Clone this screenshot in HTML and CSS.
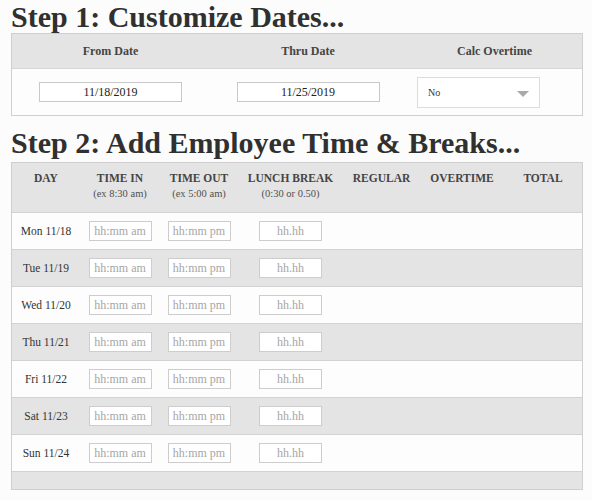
FILE: index.html
```html
<!DOCTYPE html>
<html>
<head>
<meta charset="utf-8">
<link rel="stylesheet" href="styles.css">
</head>
<body>
<div class="page">
  <h1 class="step step1">Step 1: Customize Dates...</h1>
  <div class="dates">
    <div class="dates-head">
      <div class="dh">From Date</div>
      <div class="dh">Thru Date</div>
      <div class="dh">Calc Overtime</div>
    </div>
    <div class="dates-row">
      <div class="dc"><input class="date" type="text" value="11/18/2019"></div>
      <div class="dc"><input class="date" type="text" value="11/25/2019"></div>
      <div class="dc dc-left">
        <div class="select">No<span class="arrow"></span></div>
      </div>
    </div>
  </div>

  <h1 class="step step2">Step 2: Add Employee Time &amp; Breaks...</h1>
  <div class="sheet">
    <div class="srow shead">
      <div class="hc">DAY</div>
      <div class="hc">TIME IN<span class="sub">(ex 8:30 am)</span></div>
      <div class="hc">TIME OUT<span class="sub">(ex 5:00 am)</span></div>
      <div class="hc">LUNCH BREAK<span class="sub">(0:30 or 0.50)</span></div>
      <div class="hc">REGULAR</div>
      <div class="hc">OVERTIME</div>
      <div class="hc">TOTAL</div>
    </div>

    <div class="srow drow">
      <div class="cc day">Mon 11/18</div>
      <div class="cc"><input class="tin" type="text" placeholder="hh:mm am"></div>
      <div class="cc"><input class="tin" type="text" placeholder="hh:mm pm"></div>
      <div class="cc"><input class="tin" type="text" placeholder="hh.hh"></div>
      <div class="cc"></div><div class="cc"></div><div class="cc"></div>
    </div>
    <div class="srow drow alt">
      <div class="cc day">Tue 11/19</div>
      <div class="cc"><input class="tin" type="text" placeholder="hh:mm am"></div>
      <div class="cc"><input class="tin" type="text" placeholder="hh:mm pm"></div>
      <div class="cc"><input class="tin" type="text" placeholder="hh.hh"></div>
      <div class="cc"></div><div class="cc"></div><div class="cc"></div>
    </div>
    <div class="srow drow">
      <div class="cc day">Wed 11/20</div>
      <div class="cc"><input class="tin" type="text" placeholder="hh:mm am"></div>
      <div class="cc"><input class="tin" type="text" placeholder="hh:mm pm"></div>
      <div class="cc"><input class="tin" type="text" placeholder="hh.hh"></div>
      <div class="cc"></div><div class="cc"></div><div class="cc"></div>
    </div>
    <div class="srow drow alt">
      <div class="cc day">Thu 11/21</div>
      <div class="cc"><input class="tin" type="text" placeholder="hh:mm am"></div>
      <div class="cc"><input class="tin" type="text" placeholder="hh:mm pm"></div>
      <div class="cc"><input class="tin" type="text" placeholder="hh.hh"></div>
      <div class="cc"></div><div class="cc"></div><div class="cc"></div>
    </div>
    <div class="srow drow">
      <div class="cc day">Fri 11/22</div>
      <div class="cc"><input class="tin" type="text" placeholder="hh:mm am"></div>
      <div class="cc"><input class="tin" type="text" placeholder="hh:mm pm"></div>
      <div class="cc"><input class="tin" type="text" placeholder="hh.hh"></div>
      <div class="cc"></div><div class="cc"></div><div class="cc"></div>
    </div>
    <div class="srow drow alt">
      <div class="cc day">Sat 11/23</div>
      <div class="cc"><input class="tin" type="text" placeholder="hh:mm am"></div>
      <div class="cc"><input class="tin" type="text" placeholder="hh:mm pm"></div>
      <div class="cc"><input class="tin" type="text" placeholder="hh.hh"></div>
      <div class="cc"></div><div class="cc"></div><div class="cc"></div>
    </div>
    <div class="srow drow">
      <div class="cc day">Sun 11/24</div>
      <div class="cc"><input class="tin" type="text" placeholder="hh:mm am"></div>
      <div class="cc"><input class="tin" type="text" placeholder="hh:mm pm"></div>
      <div class="cc"><input class="tin" type="text" placeholder="hh.hh"></div>
      <div class="cc"></div><div class="cc"></div><div class="cc"></div>
    </div>
    <div class="sfoot"></div>
  </div>
</div>
</body>
</html>
```

FILE: styles.css
```css
html, body {
  margin: 0;
  padding: 0;
  background: #fcfcfc;
}
body {
  font-family: "Liberation Serif", "Times New Roman", serif;
  color: #333;
}
.page {
  padding-left: 11px;
  width: 572px;
}
.step {
  margin: 0;
  font-family: "Liberation Serif", "Times New Roman", serif;
  font-size: 30px;
  line-height: 33px;
  font-weight: bold;
  color: #303030;
}
.step1 {
  margin-bottom: 0;
}
.step2 {
  margin-top: 10px;
  margin-bottom: 3px;
}

/* Step 1 box */
.dates {
  border: 1px solid #cfcfcf;
  background: #fdfdfd;
}
.dates-head,
.dates-row {
  display: grid;
  grid-template-columns: 197px 198px 175px;
}
.dates-head {
  height: 34px;
  background: #e4e4e4;
  border-bottom: 1px solid #d6d6d6;
}
.dh {
  display: flex;
  align-items: center;
  justify-content: center;
  font-size: 12px;
  font-weight: bold;
  color: #454545;
}
.dates-row {
  height: 46px;
}
.dc {
  display: flex;
  align-items: center;
  justify-content: center;
}
.dc-left {
  justify-content: flex-start;
  padding-left: 10px;
}
.date {
  box-sizing: border-box;
  width: 143px;
  height: 20px;
  margin: 0;
  padding: 0;
  border: 1px solid #c8c8c8;
  background: #fff;
  font: 12px "Liberation Serif", "Times New Roman", serif;
  color: #222;
  text-align: center;
  outline: none;
}
.select {
  position: relative;
  box-sizing: border-box;
  width: 123px;
  height: 31px;
  border: 1px solid #dcdcdc;
  background: #fff;
  display: flex;
  align-items: center;
  padding-left: 10px;
  font: 10px "Liberation Serif", "Times New Roman", serif;
  color: #333;
}
.arrow {
  position: absolute;
  right: 10px;
  top: 13px;
  width: 0;
  height: 0;
  border-left: 6.5px solid transparent;
  border-right: 6.5px solid transparent;
  border-top: 6px solid #a9a9a9;
}

/* Step 2 sheet */
.sheet {
  border: 1px solid #cfcfcf;
  background: #e4e4e4;
}
.srow {
  display: grid;
  grid-template-columns: 68px 80px 78px 105px 77px 84px 78px;
  border-bottom: 1px solid #d2d2d2;
}
.shead {
  height: 49px;
  background: #e4e4e4;
}
.hc {
  padding-top: 8px;
  text-align: center;
  font-size: 11.5px;
  line-height: 15px;
  font-weight: bold;
  color: #454545;
}
.sub {
  display: block;
  font-weight: normal;
  font-size: 10.5px;
  color: #505050;
}
.drow {
  height: 36px;
  background: #fdfdfd;
}
.drow.alt {
  background: #e4e4e4;
}
.cc {
  display: flex;
  align-items: center;
  justify-content: center;
}
.day {
  font-size: 11.5px;
  color: #333;
}
.tin {
  box-sizing: border-box;
  width: 63px;
  height: 20px;
  margin: 0;
  padding: 0;
  border: 1px solid #cdcdcd;
  background: #fff;
  font: 12px "Liberation Serif", "Times New Roman", serif;
  color: #333;
  text-align: center;
  outline: none;
}
.tin::placeholder {
  color: #a6a6a6;
  opacity: 1;
}
.sfoot {
  height: 17px;
  background: #e4e4e4;
}
```
